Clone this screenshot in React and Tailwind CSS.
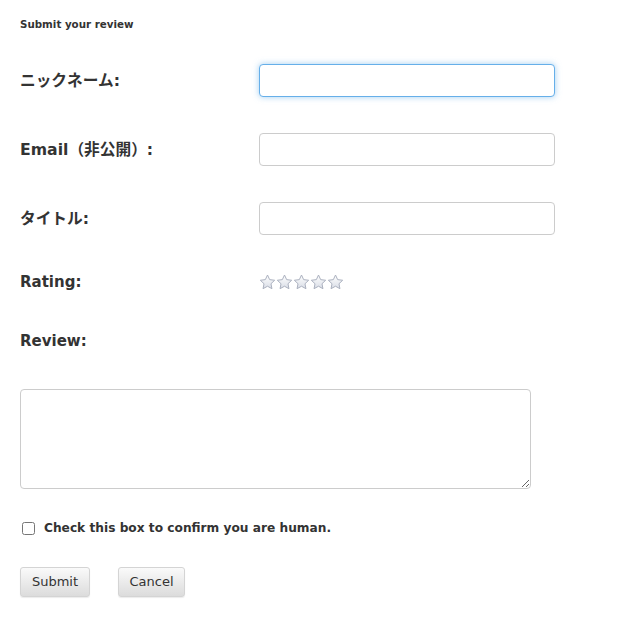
import React from "react";

const Star = () => (
  <svg width="17" height="16" viewBox="0 0 24 23" className="block">
    <defs>
      <linearGradient id="starFill" x1="0" y1="0" x2="0" y2="1">
        <stop offset="0%" stopColor="#ffffff" />
        <stop offset="100%" stopColor="#d9dde6" />
      </linearGradient>
    </defs>
    <path
      d="M12 1.5l3.1 6.6 7.2.9-5.3 5 1.4 7.1L12 17.6l-6.4 3.5L7 14l-5.3-5 7.2-.9z"
      fill="url(#starFill)"
      stroke="#a9afbd"
      strokeWidth="1.4"
      strokeLinejoin="round"
    />
  </svg>
);

const Row = ({ label, focused }) => (
  <div className="grid grid-cols-[239px_296px] items-center h-[33px]">
    <label className="text-[15.7px] font-bold text-[#333]">{label}</label>
    <input
      type="text"
      className={
        focused
          ? "h-[33px] w-[296px] rounded-[4px] border border-[#66afe9] bg-white shadow-[0_0_6px_rgba(102,175,233,0.6)] outline-none"
          : "h-[33px] w-[296px] rounded-[4px] border border-[#ccc] bg-white outline-none"
      }
    />
  </div>
);

export default function App() {
  return (
    <div
      className="min-h-[631px] w-[637px] bg-white px-5 text-[#333]"
      style={{ fontFamily: '"DejaVu Sans", Verdana, "Noto Sans CJK JP", sans-serif' }}
    >
      <h3 className="pt-[17px] text-[10.3px] font-bold leading-[14px]">Submit your review</h3>

      <div className="mt-[33px] flex flex-col gap-[36px]">
        <Row label="ニックネーム:" focused />
        <Row label="Email（非公開）:" />
        <Row label="タイトル:" />
      </div>

      <div className="mt-[36px] grid grid-cols-[239px_296px] items-center h-[20px]">
        <span className="text-[15px] font-bold">Rating:</span>
        <div className="flex items-center">
          <Star />
          <Star />
          <Star />
          <Star />
          <Star />
        </div>
      </div>

      <div className="mt-[40px] h-[20px] flex items-center">
        <span className="text-[15px] font-bold">Review:</span>
      </div>

      <textarea className="mt-[38px] block h-[100px] w-[511px] rounded-[4px] border border-[#ccc] bg-white outline-none" />

      <label className="mt-[30px] flex items-center h-[18px]">
        <input type="checkbox" className="ml-[2px] h-[13px] w-[13px]" />
        <span className="ml-[9px] text-[12.2px] font-bold">Check this box to confirm you are human.</span>
      </label>

      <div className="mt-[30px] flex gap-[28px]">
        <button className="h-[30px] w-[70px] rounded-[3px] border border-[#d4d4d4] bg-gradient-to-b from-[#fafafa] to-[#dcdcdc] text-[13px] text-[#333] shadow-[0_1px_1px_rgba(0,0,0,0.08)]">
          Submit
        </button>
        <button className="h-[30px] w-[67px] rounded-[3px] border border-[#d4d4d4] bg-gradient-to-b from-[#fafafa] to-[#dcdcdc] text-[13px] text-[#333] shadow-[0_1px_1px_rgba(0,0,0,0.08)]">
          Cancel
        </button>
      </div>
    </div>
  );
}
